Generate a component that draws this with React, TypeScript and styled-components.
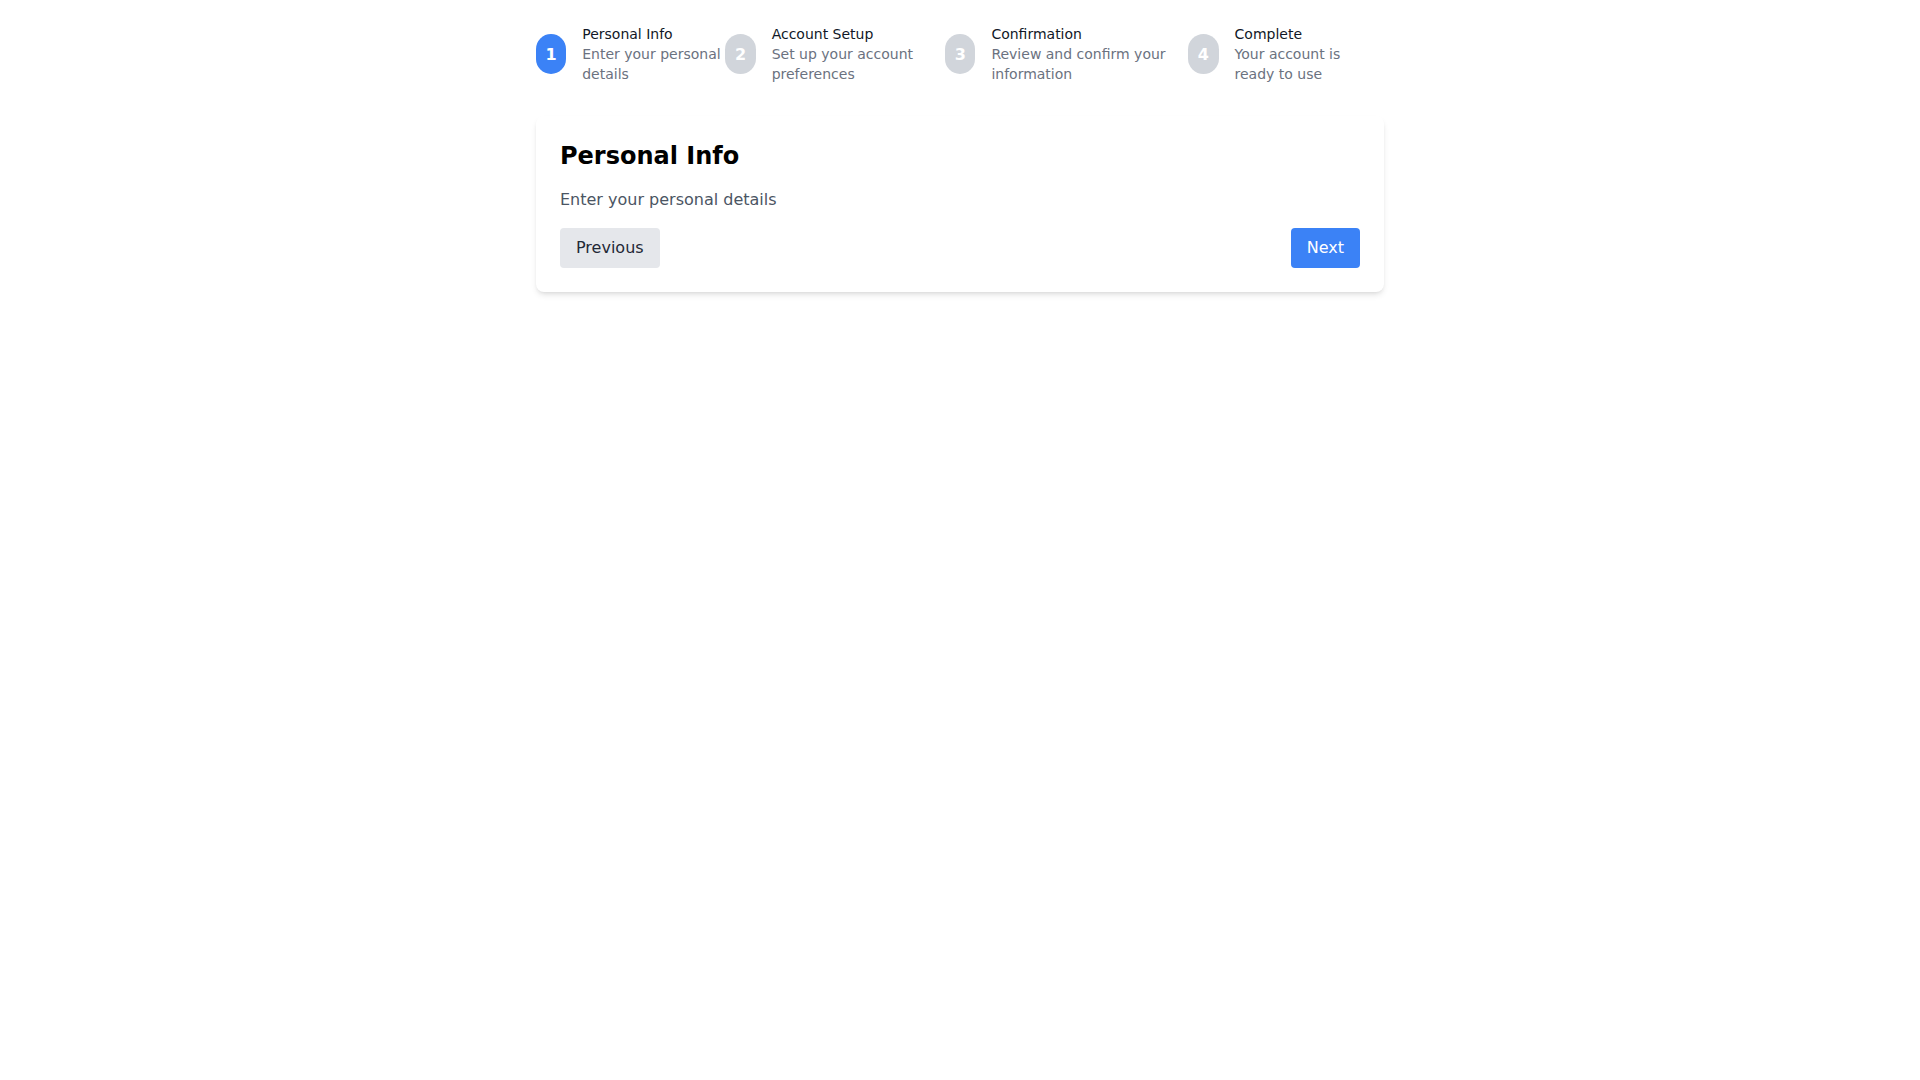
import React from 'react';
import styled, { createGlobalStyle } from 'styled-components';

const GlobalStyle = createGlobalStyle`
  body {
    margin: 0;
    background: #ffffff;
    font-family: "DejaVu Sans", "Noto Sans", sans-serif;
  }
  * {
    box-sizing: border-box;
  }
`;

const Page = styled.div`
  max-width: 896px;
  margin: 0 auto;
  padding: 24px;
`;

const Stepper = styled.div`
  display: flex;
  align-items: center;
  margin-bottom: 32px;
`;

const Step = styled.div`
  display: flex;
  align-items: center;
`;

const StepNumber = styled.div<{ $active?: boolean }>`
  display: flex;
  align-items: center;
  justify-content: center;
  width: 40px;
  height: 40px;
  border-radius: 9999px;
  background-color: ${(p) => (p.$active ? '#3b82f6' : '#d1d5db')};
  color: #ffffff;
  font-size: 16px;
  font-weight: bold;
`;

const StepText = styled.div`
  margin-left: 16px;
  font-size: 14px;
  line-height: 20px;
`;

const StepTitle = styled.div`
  color: #111827;
`;

const StepDescription = styled.div`
  color: #6b7280;
`;

const Card = styled.div`
  padding: 24px;
  border-radius: 8px;
  background-color: #ffffff;
  box-shadow: 0 4px 6px -1px rgba(0, 0, 0, 0.1), 0 2px 4px -2px rgba(0, 0, 0, 0.1);
`;

const CardTitle = styled.h2`
  margin: 0 0 16px;
  font-size: 24px;
  line-height: 32px;
  font-weight: bold;
  color: #000000;
`;

const CardText = styled.p`
  margin: 0 0 16px;
  font-size: 16px;
  line-height: 24px;
  color: #4b5563;
`;

const Actions = styled.div`
  display: flex;
  justify-content: space-between;
`;

const Button = styled.button<{ $primary?: boolean }>`
  padding: 8px 16px;
  border: none;
  border-radius: 4px;
  font-family: inherit;
  font-size: 16px;
  line-height: 24px;
  cursor: pointer;
  background-color: ${(p) => (p.$primary ? '#3b82f6' : '#e5e7eb')};
  color: ${(p) => (p.$primary ? '#ffffff' : '#1f2937')};
`;

const steps = [
  { title: 'Personal Info', description: 'Enter your personal details' },
  { title: 'Account Setup', description: 'Set up your account preferences' },
  { title: 'Confirmation', description: 'Review and confirm your information' },
  { title: 'Complete', description: 'Your account is ready to use' },
];

const App: React.FC = () => {
  const current = 0;
  return (
    <>
      <GlobalStyle />
      <Page>
        <Stepper>
          {steps.map((step, i) => (
            <Step key={step.title}>
              <StepNumber $active={i <= current}>{i + 1}</StepNumber>
              <StepText>
                <StepTitle>{step.title}</StepTitle>
                <StepDescription>{step.description}</StepDescription>
              </StepText>
            </Step>
          ))}
        </Stepper>
        <Card>
          <CardTitle>{steps[current].title}</CardTitle>
          <CardText>{steps[current].description}</CardText>
          <Actions>
            <Button>Previous</Button>
            <Button $primary>Next</Button>
          </Actions>
        </Card>
      </Page>
    </>
  );
};

export default App;
